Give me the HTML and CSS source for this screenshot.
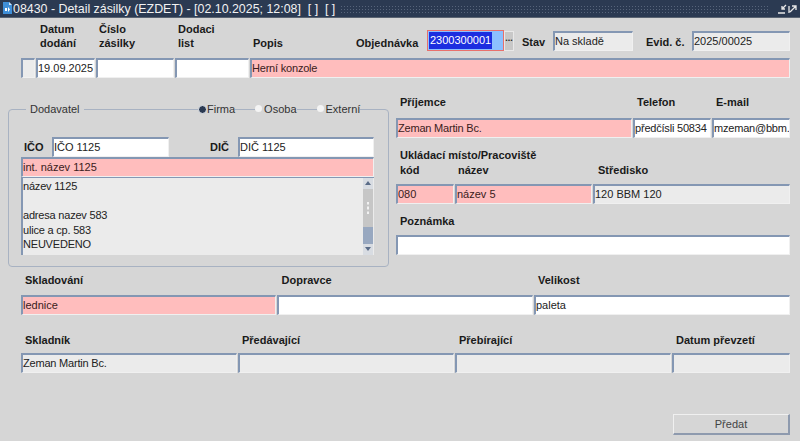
FILE: index.html
```html
<!DOCTYPE html>
<html lang="cs">
<head>
    <meta charset="UTF-8">
    <title>Detail zásilky</title>
    <link rel="stylesheet" href="styles.css">
</head>
<body>
    <div class="window">
        <div class="titlebar">
            <svg class="app-icon" width="11" height="13" viewBox="0 0 11 13">
                <path d="M1 0h6l3 3v9H1z" fill="#3f8fd8"/>
                <path d="M7 0l3 3H7z" fill="#cfe4f7"/>
                <path d="M3 6h2v3H3zM6 5l2 2.500L6 10z" fill="#fff"/>
            </svg>
            <span class="title">08430 - Detail zásilky (EZDET) - [02.10.2025; 12:08]&nbsp; [ ]&nbsp; [ ]</span>
            <div class="dots"></div>
            <svg class="win-btn" width="10" height="10" viewBox="0 0 10 10">
                <path d="M9 1L5 5M5 2v3h3M1 9h7" stroke="#e8e8e8" stroke-width="1.300" fill="none"/>
            </svg>
            <svg class="win-btn" width="10" height="10" viewBox="0 0 10 10">
                <path d="M2 8l6-6M4 2h4v4M1 2v7" stroke="#e8e8e8" stroke-width="1.300" fill="none"/>
            </svg>
        </div>

        <div class="head-row">
            <div class="lbl w-datum">Datum<br>dodání</div>
            <div class="lbl w-cislo">Číslo<br>zásilky</div>
            <div class="lbl w-dodaci">Dodaci<br>list</div>
            <div class="lbl w-popis">Popis</div>
            <div class="lbl w-obj">Objednávka</div>
            <div class="field order"><span class="selected">2300300001</span></div>
            <div class="lov">...</div>
            <div class="lbl w-stav">Stav</div>
            <div class="field grey w-stav-f">Na skladě</div>
            <div class="lbl w-evid">Evid. č.</div>
            <div class="field grey w-evid-f">2025/00025</div>
        </div>

        <div class="row row-main">
            <div class="field grey"></div>
            <div class="field white">19.09.2025</div>
            <div class="field white"></div>
            <div class="field white"></div>
            <div class="field pink tight">Herní konzole</div>
        </div>

        <div class="middle">
            <fieldset class="group">
                <legend class="legend">Dodavatel</legend>
                <div class="radios">
                    <span class="radio on">Firma</span>
                    <span class="radio">Osoba</span>
                    <span class="radio">Externí</span>
                </div>
                <div class="id-row">
                    <div class="lbl id-lbl">IČO</div>
                    <div class="field white ico">IČO 1125</div>
                    <div class="lbl dic-lbl">DIČ</div>
                    <div class="field white dic">DIČ 1125</div>
                </div>
                <div class="field pink int-name">int. název 1125</div>
                <div class="memo">
                    <div class="memo-text tight">název 1125<br><br>adresa nazev 583<br>ulice a cp. 583<br>NEUVEDENO</div>
                    <div class="scroll">
                        <div class="arrow up"></div>
                        <div class="track">
                            <div class="grip"></div>
                            <div class="thumb"></div>
                        </div>
                        <div class="arrow down"></div>
                    </div>
                </div>
            </fieldset>

            <div class="right">
                <div class="lbl-row top-lbls">
                    <div class="lbl rw-name">Příjemce</div>
                    <div class="lbl rw-tel">Telefon</div>
                    <div class="lbl">E-mail</div>
                </div>
                <div class="row row-person">
                    <div class="field pink tight">Zeman Martin Bc.</div>
                    <div class="field white tight">předčísli 50834</div>
                    <div class="field white tight">mzeman@bbm.</div>
                </div>
                <div class="lbl place-lbl">Ukládací místo/Pracoviště</div>
                <div class="lbl-row place-cols">
                    <div class="lbl rw-kod">kód</div>
                    <div class="lbl rw-nazev">název</div>
                    <div class="lbl">Středisko</div>
                </div>
                <div class="row row-place">
                    <div class="field pink">080</div>
                    <div class="field pink">název 5</div>
                    <div class="field grey">120 BBM 120</div>
                </div>
                <div class="lbl note-lbl">Poznámka</div>
                <div class="field white note"></div>
            </div>
        </div>

        <div class="lbl-row store-lbls">
            <div class="lbl sw-1">Skladování</div>
            <div class="lbl sw-1">Dopravce</div>
            <div class="lbl">Velikost</div>
        </div>
        <div class="row row-store">
            <div class="field pink">lednice</div>
            <div class="field white"></div>
            <div class="field white">paleta</div>
        </div>

        <div class="lbl-row staff-lbls">
            <div class="lbl sk-1">Skladník</div>
            <div class="lbl sk-1">Předávající</div>
            <div class="lbl sk-1">Přebírající</div>
            <div class="lbl">Datum převzetí</div>
        </div>
        <div class="row row-staff">
            <div class="field grey tight">Zeman Martin Bc.</div>
            <div class="field grey"></div>
            <div class="field grey"></div>
            <div class="field grey"></div>
        </div>

        <div class="actions">
            <button type="button" class="btn">Předat</button>
        </div>
    </div>
</body>
</html>
```
FILE: styles.css
```css
* {
    box-sizing: border-box;
}

body {
    margin: 0;
    font-family: "Liberation Sans", Arial, sans-serif;
    font-size: 11px;
    color: #222;
    background-color: #d6d6d6;
}

.window {
    width: 800px;
    height: 441px;
    overflow: hidden;
    background-color: #d6d6d6;
}

.titlebar {
    display: flex;
    align-items: center;
    height: 18px;
    padding: 0 2px;
    background-color: #2b3a52;
    border-bottom: 1px solid #5a6472;
    color: #f2f2f2;
}

.app-icon {
    flex: none;
}

.title {
    flex: none;
    width: 327px;
    font-size: 12.400px;
    white-space: nowrap;
}

.dots {
    flex: none;
    width: 429px;
    height: 8px;
    margin-right: 8px;
    background-image: radial-gradient(#56647a 1px, transparent 1px);
    background-size: 3px 3px;
}

.win-btn {
    flex: none;
    margin-right: 1px;
}

.lbl {
    flex: none;
    font-weight: bold;
    font-size: 11px;
    line-height: 14px;
    color: #1a1a1a;
    white-space: nowrap;
}

.field {
    height: 20px;
    padding: 0;
    overflow: hidden;
    font-size: 11px;
    line-height: 17px;
    white-space: nowrap;
    border-style: solid;
    border-width: 2px 1px 1px 2px;
    border-color: #8497b3 #f0f0f0 #f0f0f0 #8497b3;
}

.white {
    background-color: #fff;
}

.pink {
    background-color: #ffbdbd;
    color: #3a2020;
}

.grey {
    background-color: #ebebeb;
}

.tight {
    letter-spacing: -0.200px;
}

.row {
    display: grid;
    column-gap: 1px;
}

.lbl-row {
    display: flex;
}

/* top row */
.head-row {
    display: flex;
    align-items: flex-end;
    height: 33px;
    padding-left: 40px;
}

.w-datum { width: 59px; margin-bottom: 1px; }
.w-cislo { width: 79px; margin-bottom: 1px; }
.w-dodaci { width: 75px; margin-bottom: 1px; }
.w-popis { width: 103px; margin-bottom: 1px; }
.w-obj { width: 71px; margin-bottom: 1px; }

.order {
    flex: none;
    width: 77px;
    height: 21px;
    padding: 1px;
    background-color: #8cc0ff;
    border: 1px solid #e8706c;
    line-height: 17px;
}

.selected {
    display: inline-block;
    padding: 0 1px;
    background-color: #1c2ee0;
    color: #fff;
}

.lov {
    flex: none;
    width: 10px;
    height: 20px;
    margin-right: 8px;
    background-color: #c8c8c8;
    border: 1px solid #e8e8e8;
    font-size: 9px;
    font-weight: bold;
    line-height: 12px;
    text-align: center;
}

.w-stav { width: 31px; margin-bottom: 2px; }
.w-stav-f { flex: none; width: 80px; margin-right: 13px; }
.w-evid { width: 46px; margin-bottom: 2px; }
.w-evid-f { flex: none; width: 98px; }

.row-main {
    grid-template-columns: 14px 59px 78px 74px 540px;
    margin: 7px 0 0 21px;
}

/* middle part */
.middle {
    display: flex;
    margin-top: 16px;
}

.group {
    position: relative;
    flex: none;
    width: 381px;
    height: 165px;
    margin: 8px 0 0 8px;
    padding: 21px 13px 0 12px;
    border: 1px solid #a8b2c2;
    border-radius: 4px;
}

.legend {
    margin-left: 5px;
    padding: 0 4px;
    font-size: 11px;
    line-height: 14px;
    color: #333;
}

.radios {
    position: absolute;
    top: -14px;
    left: 189px;
    display: flex;
    column-gap: 20px;
}

.radio {
    position: relative;
    padding-left: 9px;
    font-size: 11px;
    line-height: 14px;
    color: #333;
    background-color: #d6d6d6;
}

.radio::before {
    content: "";
    position: absolute;
    left: 0;
    top: 3px;
    width: 7px;
    height: 7px;
    border-radius: 50%;
    background-color: #f4f4f4;
}

.radio.on::before {
    background-color: #2b3a52;
    border: 1px solid #e4e8ee;
}

.id-row {
    display: flex;
    align-items: center;
    padding-left: 3px;
}

.id-lbl { width: 28px; }
.dic-lbl { width: 28px; }
.ico { width: 117px; margin-right: 41px; }
.dic { width: 136px; }

.int-name {
    width: 353px;
}

.memo {
    display: flex;
    width: 353px;
    height: 78px;
    background-color: #ebebeb;
    border-left: 2px solid #8497b3;
    border-top: 1px solid #8497b3;
}

.memo-text {
    flex: 1;
    padding-top: 1px;
    line-height: 14.500px;
}

.scroll {
    display: flex;
    flex-direction: column;
    width: 10px;
    margin-right: 1px;
    background-color: #c6c6c6;
}

.arrow {
    flex: none;
    height: 11px;
    position: relative;
    background-color: #d8dce2;
}

.arrow::after {
    content: "";
    position: absolute;
    left: 2px;
    border-left: 3px solid transparent;
    border-right: 3px solid transparent;
}

.up::after {
    top: 3px;
    border-bottom: 4px solid #5a6c88;
}

.down::after {
    top: 3px;
    border-top: 4px solid #5a6c88;
}

.track {
    flex: 1;
    display: flex;
    flex-direction: column;
}

.grip {
    flex: 1;
    background-image: radial-gradient(#f2f2f2 1px, transparent 1px);
    background-size: 4px 5px;
    background-position: center;
    background-clip: content-box;
    padding: 13px 2px;
}

.thumb {
    flex: none;
    height: 17px;
    background-color: #98a8c0;
}

.right {
    flex: none;
    width: 394px;
    margin-left: 7px;
}

.top-lbls {
    padding-left: 4px;
    margin-top: 1px;
}

.rw-name { width: 237px; }
.rw-tel { width: 79px; }

.row-person {
    grid-template-columns: 236px 78px 78px;
    margin-top: 9px;
}

.place-lbl {
    margin: 10px 0 0 4px;
}

.place-cols {
    margin-top: 1px;
    padding-left: 4px;
}

.rw-kod { width: 58px; }
.rw-nazev { width: 140px; }

.row-place {
    grid-template-columns: 58px 137px 197px;
    margin-top: 7px;
}

.note-lbl {
    margin: 10px 0 0 4px;
}

.note {
    width: 394px;
    margin-top: 7px;
}

/* bottom rows */
.store-lbls {
    margin-top: 6px;
    padding-left: 25px;
}

.sw-1 { width: 256.500px; }

.row-store {
    grid-template-columns: 255px 256px 256px;
    margin: 8px 0 0 21px;
}

.staff-lbls {
    margin-top: 18px;
    padding-left: 25px;
}

.sk-1 { width: 217px; }

.row-staff {
    grid-template-columns: 216px 216px 216px 118px;
    margin: 6px 0 0 21px;
}

.actions {
    display: flex;
    justify-content: flex-end;
    margin-top: 41px;
    padding-right: 10px;
}

.btn {
    width: 117px;
    height: 21px;
    padding: 0;
    font-family: inherit;
    font-size: 11px;
    color: #444;
    background-color: #d6d6d6;
    border-style: solid;
    border-width: 1px 2px 2px 1px;
    border-color: #f0f0f0 #8e9aae #8e9aae #f0f0f0;
}
```
